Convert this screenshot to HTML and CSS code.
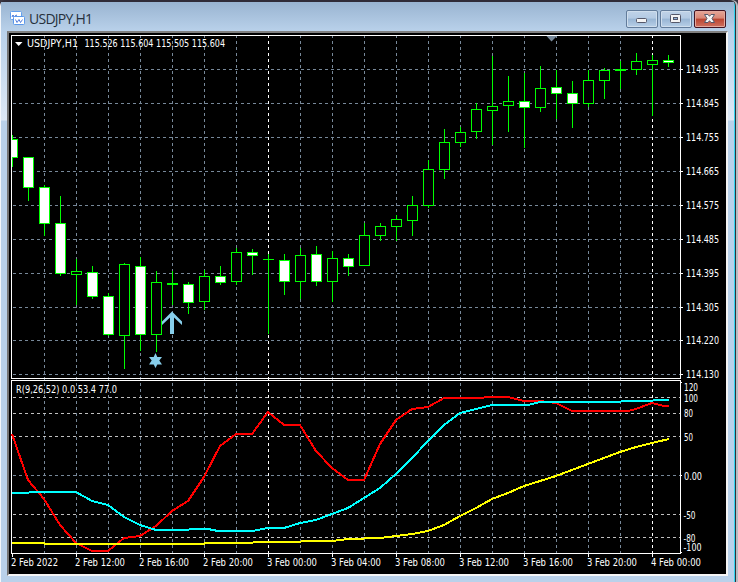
FILE: index.html
```
<!DOCTYPE html>
<html lang="en">
<head>
  <meta charset="UTF-8">
  <title>USDJPY,H1</title>
  <link rel="stylesheet" href="styles.css">
</head>
<body>
  <div class="window">
    <div class="titlebar">
      <svg class="app-icon" width="15" height="15" viewBox="0 0 15 15">
        <rect x="0.5" y="0.5" width="11" height="8" rx="1" fill="#fff" stroke="#62a0ee"/>
        <path d="M2 6l1-2 1 2 1-1 2-1" fill="none" stroke="#3f6fd8"/>
        <rect x="3.5" y="5.5" width="11" height="8" rx="1" fill="#fff" stroke="#5b98ea"/>
        <path d="M5.500 8.500l1.500 3 2-3 1.500 3 2-3" fill="none" stroke="#3f6fd8" stroke-width="0.9"/>
      </svg>
      <span class="title">USDJPY,H1</span>
      <div class="buttons">
        <button class="btn" aria-label="Minimize">
          <svg width="12" height="12"><rect x="0.5" y="5.5" width="10" height="4" rx="1" fill="#f4f4f4" stroke="#55586a"/></svg>
        </button>
        <button class="btn" aria-label="Maximize">
          <svg width="12" height="12"><rect x="0.5" y="1.5" width="10" height="8" rx="1" fill="#f4f4f4" stroke="#55586a"/><rect x="3.5" y="4.5" width="4" height="2" fill="#8fb2d8" stroke="#55586a"/></svg>
        </button>
        <button class="btn close" aria-label="Close">
          <svg width="12" height="12"><path d="M0.500 1.500H4L5.500 3.300L7 1.500H10.500L8 5.500L10.500 9.500H7L5.500 7.700L4 9.500H0.500L3 5.500Z" fill="#f6f6f6" stroke="#55586a"/></svg>
        </button>
      </div>
    </div>
    <div class="client">
      <svg id="chart" width="717" height="541" viewBox="9 33 717 541"></svg>
    </div>
  </div>
  <script src="chart.js"></script>
</body>
</html>
```
FILE: styles.css
```
body {
  margin: 0;
  background: #3a3540;
  overflow: hidden;
}

.window {
  box-sizing: border-box;
  width: 735px;
  height: 582px;
  padding: 0 6px;
  border-top: 2px solid #302c38;
  border-left: 1px solid #f4f7fb;
  border-right: 1px solid #2fd3f0;
  border-radius: 6px 6px 0 0;
  background: linear-gradient(#99b4d1 0, #b9d1ea 30px, #dde8f5 118px, #b9d1ea 119px);
  box-shadow: 1px 0 0 #303238, 3px 0 0 #b8bcc2;
}

.titlebar {
  display: flex;
  align-items: center;
  height: 29px;
  margin: 0 -6px;
  padding: 0 8px 0 9px;
  background: linear-gradient(#99b4d1, #b9d1ea);
}

.app-icon {
  margin-top: 4px;
}

.title {
  margin: 5px 0 0 4px;
  font: 14px/20px "Open Sans", "Noto Sans", sans-serif;
  letter-spacing: -0.75px;
  color: #26303c;
}

.buttons {
  display: flex;
  gap: 2px;
  margin: 5px 0 0 auto;
}

.btn {
  box-sizing: border-box;
  display: flex;
  align-items: center;
  justify-content: center;
  width: 32px;
  height: 18px;
  padding: 0;
  border: 1px solid #627c9b;
  border-radius: 2px;
  background: linear-gradient(#c0d3e8 0, #b3cae3 45%, #98b5d4 50%, #b8d0e8 100%);
  box-shadow: inset 0 0 0 1px #cfdeed;
}

.close {
  border-color: #431422;
  background: linear-gradient(#e6a697 0, #d98676 45%, #bb4430 50%, #ce7060 100%);
  box-shadow: inset 0 0 0 1px #e3a89d;
}

.client {
  border: solid;
  border-width: 2px;
  border-color: #808080 #f5f5f5 #f5f5f5 #747474;
  background: #000;
}

#chart {
  display: block;
  background: #000;
}

#chart text {
  font: 11px "DejaVu Sans Condensed", "DejaVu Sans", sans-serif;
  fill: #fff;
}

.crisp {
  shape-rendering: crispEdges;
}

.grid { fill: #778899; }
.level { fill: #c0c0c0; }
.day { fill: #fff; }
.frame { fill: #fff; }
.wick { fill: #0f0; }
.bull { fill: #000; }
.bear { fill: #fff; }

.curve {
  fill: none;
  stroke-width: 2;
}

.signal { fill: #87ceeb; }
```
FILE: chart.js
```
const chart = document.getElementById("chart");

function add(name, attrs, text) {
  const el = document.createElementNS("http://www.w3.org/2000/svg", name);
  for (const key in attrs) el.setAttribute(key, attrs[key]);
  if (text) el.textContent = text;
  chart.appendChild(el);
}

function rect(x, y, width, height, cls) {
  add("rect", { x, y, width, height, class: "crisp " + cls });
}

function label(x, y, width, text) {
  add("text", { x, y, textLength: width, lengthAdjust: "spacingAndGlyphs" }, text);
}

function hDashes(y, cls) {
  for (let x = 13; x < 680; x += 6) rect(x, y, Math.min(3, 680 - x), 1, cls);
}

// vertical grid
for (let x = 44; x < 680; x += 32) {
  const cls = x === 268 || x === 652 ? "day" : "grid";
  rect(x, 36, 1, 2, cls);
  for (let y = 41; y < 553; y += 6) rect(x, y, 1, Math.min(3, 553 - y), cls);
}

// price grid
const prices = [
  [69, "114.935"], [103, "114.845"], [137, "114.755"], [171, "114.665"], [205, "114.575"],
  [239, "114.485"], [273, "114.395"], [307, "114.305"], [340, "114.220"], [374, "114.130"]
];
prices.forEach(([y, text]) => {
  hDashes(y, "grid");
  rect(681, y, 2, 1, "frame");
  label(686, y + 4, 33, text);
});

// indicator levels
[397, 413, 436, 514, 537].forEach(y => hDashes(y, "level"));
hDashes(475, "grid");

// frames
rect(11, 35, 670, 1, "frame");
rect(11, 378, 670, 1, "frame");
rect(11, 35, 1, 344, "frame");
rect(680, 35, 1, 344, "frame");
rect(11, 380, 670, 1, "frame");
rect(11, 553, 670, 1, "frame");
rect(11, 380, 1, 174, "frame");
rect(680, 380, 1, 174, "frame");

// high, body top, body bottom, low, 1 = bearish
const candles = [
  [135, 139, 158, 167, 1], [157, 157, 188, 201, 1], [185, 187, 224, 236, 1], [196, 223, 274, 276, 1],
  [259, 271, 275, 305, 0], [266, 272, 297, 299, 1], [293, 296, 335, 336, 1], [263, 264, 336, 369, 0],
  [257, 266, 335, 351, 1], [271, 282, 335, 352, 0], [271, 283, 285, 305, 0], [282, 284, 303, 314, 1],
  [270, 276, 302, 310, 0], [266, 276, 283, 285, 1], [248, 252, 282, 285, 0], [249, 252, 256, 275, 1],
  [254, 259, 260, 334, 0], [254, 260, 282, 295, 1], [248, 255, 282, 299, 0], [246, 254, 282, 286, 1],
  [251, 258, 282, 302, 0], [254, 258, 267, 276, 1], [223, 235, 266, 266, 0], [223, 226, 236, 241, 0],
  [215, 219, 227, 241, 0], [196, 205, 221, 236, 0], [160, 169, 206, 208, 0], [129, 142, 170, 179, 0],
  [127, 132, 143, 147, 0], [103, 109, 132, 139, 0], [56, 106, 111, 145, 0], [76, 101, 106, 132, 0],
  [73, 101, 108, 148, 1], [66, 88, 108, 112, 0], [70, 87, 94, 119, 1], [81, 93, 104, 128, 1],
  [70, 80, 104, 107, 0], [68, 70, 81, 99, 0], [61, 69, 71, 89, 0], [53, 61, 70, 75, 0],
  [55, 60, 65, 116, 0], [55, 60, 63, 67, 1]
];
candles.forEach(([high, top, bottom, low, bear], i) => {
  const x = 12 + i * 16;
  const left = Math.max(x - 5, 12);
  const right = x + 6;
  rect(x, high, 1, low - high, "wick");
  rect(left, top, right - left, bottom - top, "wick");
  if (bottom - top > 2) {
    const inner = i === 0 ? left : left + 1;
    rect(inner, top + 1, right - 1 - inner, bottom - top - 2, bear ? "bear" : "bull");
  }
});

// indicator curves
const curves = {
  "#ff0000": "12,434 28,480 44,499 60,525 76,543 92,551 108,551 124,538 140,536 156,526 172,511 188,501 204,477 220,446 236,434 252,434 268,412 284,425 300,425 316,451 332,468 348,480 364,480 380,444 396,420 412,409 428,407 444,398 476,398 492,397 508,397 524,401 540,401 556,403 572,411 628,411 636,409 652,403 664,406 669,406",
  "#00ffff": "12,493 28,493 30,492 76,492 92,501 108,505 124,517 140,525 156,530 188,530 190,529 208,529 218,531 252,531 268,528 284,528 300,523 316,520 332,514 348,508 364,498 380,488 396,474 412,458 428,441 444,425 460,413 476,409 492,405 528,405 540,402 620,402 622,401 652,401 654,400 669,400",
  "#ffff00": "12,543 44,543 45,544 204,544 205,543 252,543 254,542 300,542 302,541 332,541 348,539 380,538 396,536 412,534 428,531 444,525 460,516 476,508 492,499 508,493 524,486 540,481 556,476 572,470 588,464 604,458 620,452 636,447 652,443 669,439"
};
for (const color in curves) {
  add("polyline", { points: curves[color], stroke: color, class: "curve crisp" });
}

// signals
add("path", { d: "M172 311.500L182 321.500V325L174 317.500V334H170V317.500L162 325V321.500Z", class: "signal" });
add("path", { d: "M155.500 353L157.300 357H162L159.300 360.500L162 364.500H157.300L155.500 368L153.700 364.500H149L151.700 360.500L149 357H153.700Z", class: "signal" });
add("path", { d: "M546.500 36H557L551.500 41.500Z", class: "grid" });

// chart captions
add("path", { d: "M15 42H22.500L18.700 46Z", class: "frame" });
label(27, 47, 51, "USDJPY,H1");
label(84.5, 47, 140.5, "115.526 115.604 115.505 115.604");
label(16, 393, 101, "R(9,26,52) 0.0 53.4 77.0");

// indicator scale
[
  [391, 14, "120"], [402, 14, "100"], [417, 9, "80"], [441, 9, "50"], [480, 18, "0.00"],
  [519, 12, "-50"], [542, 12, "-80"], [551, 18, "-100"]
].forEach(([y, w, text]) => label(text[0] === "-" ? 683.5 : 684, y, w, text));
[382, 475, 552].forEach(y => rect(681, y, 1, 1, "frame"));

// time scale
[
  "2 Feb 2022", "2 Feb 12:00", "2 Feb 16:00", "2 Feb 20:00", "3 Feb 00:00", "3 Feb 04:00",
  "3 Feb 08:00", "3 Feb 12:00", "3 Feb 16:00", "3 Feb 20:00", "4 Feb 00:00"
].forEach((text, i) => {
  rect(12 + i * 64, 554, 1, 3, "frame");
  label(11 + i * 64, 566, i ? 50 : 47, text);
});
```
